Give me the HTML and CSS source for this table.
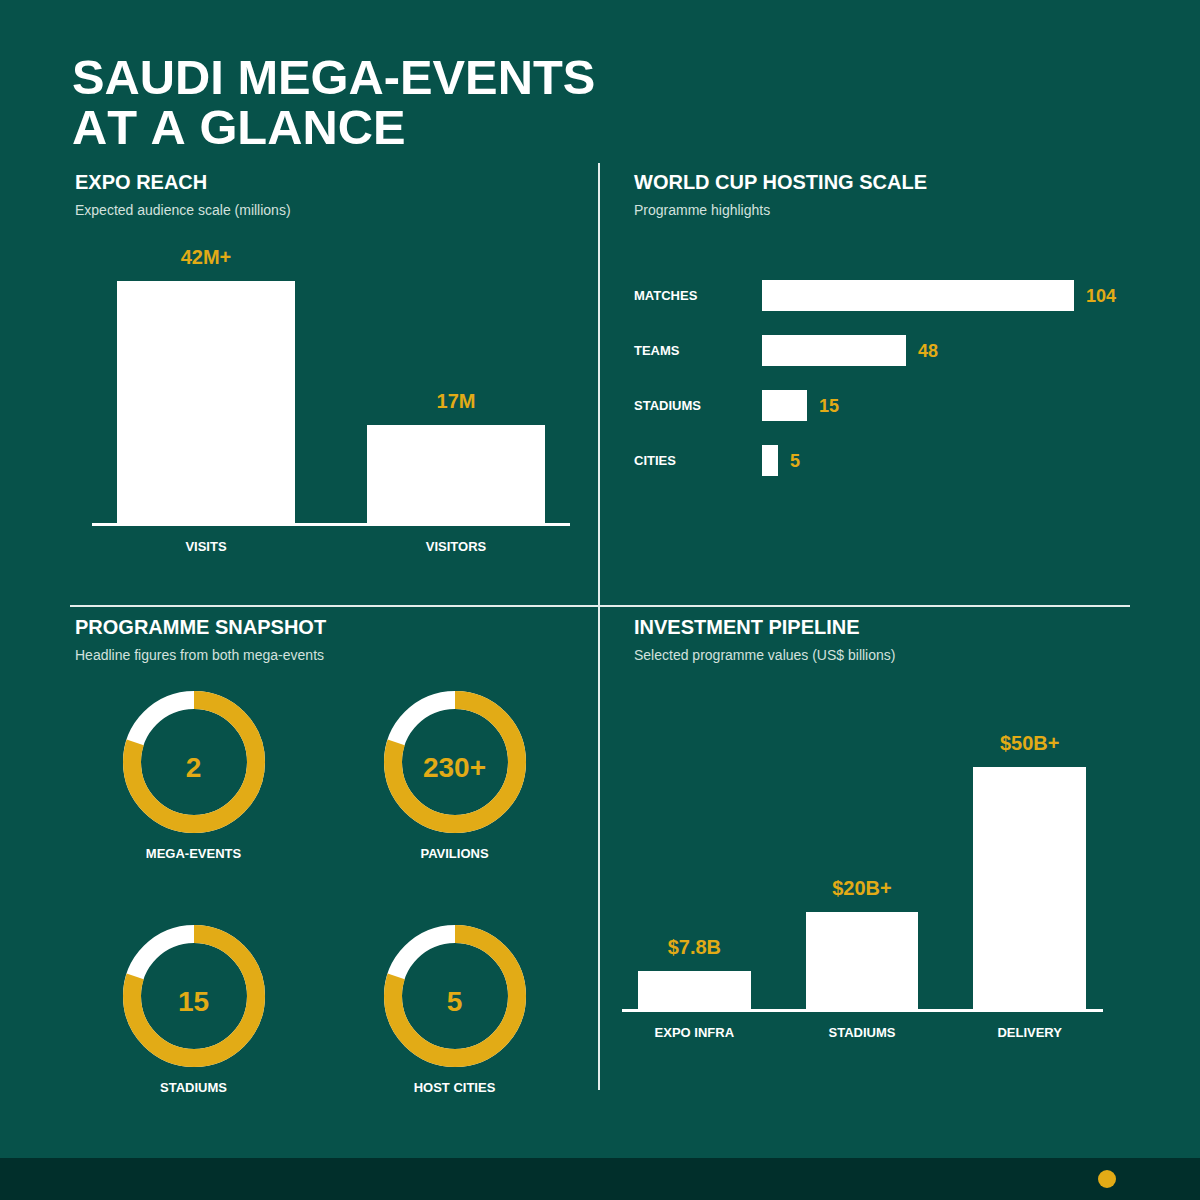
FILE: index.html
```html
<!DOCTYPE html>
<html lang="en">
<head>
<meta charset="utf-8">
<title>Saudi Mega-Events at a Glance</title>
<link rel="stylesheet" href="styles.css">
</head>
<body>
<div class="page">
  <main class="main">
    <h1 class="title">SAUDI MEGA-EVENTS<br>AT A GLANCE</h1>
    <div class="grid">
      <section class="cell cell-tl">
        <h2 class="heading">EXPO REACH</h2>
        <p class="sub">Expected audience scale (millions)</p>
        <div class="vchart expo">
          <div class="col"><span class="val">42M+</span><div class="bar" style="height:242px"></div></div>
          <div class="col"><span class="val">17M</span><div class="bar" style="height:98px"></div></div>
        </div>
        <div class="vlabels expo">
          <span class="cat">VISITS</span>
          <span class="cat">VISITORS</span>
        </div>
      </section>

      <section class="cell cell-tr">
        <h2 class="heading">WORLD CUP HOSTING SCALE</h2>
        <p class="sub">Programme highlights</p>
        <div class="hbars">
          <div class="hrow"><span class="hlabel">MATCHES</span><div class="hbar" style="width:312px"></div><span class="hval">104</span></div>
          <div class="hrow"><span class="hlabel">TEAMS</span><div class="hbar" style="width:144px"></div><span class="hval">48</span></div>
          <div class="hrow"><span class="hlabel">STADIUMS</span><div class="hbar" style="width:45px"></div><span class="hval">15</span></div>
          <div class="hrow"><span class="hlabel">CITIES</span><div class="hbar" style="width:16px"></div><span class="hval">5</span></div>
        </div>
      </section>

      <section class="cell cell-bl">
        <h2 class="heading">PROGRAMME SNAPSHOT</h2>
        <p class="sub">Headline figures from both mega-events</p>
        <div class="donuts">
          <div class="donut">
            <div class="ring">
              <svg viewBox="0 0 142 142" width="142" height="142"><circle class="ring-bg" cx="71" cy="71" r="62"/><circle class="ring-fg" cx="71" cy="71" r="62" stroke-dasharray="311.65 389.56" transform="rotate(-90 71 71)"/></svg>
              <span class="ring-num">2</span>
            </div>
            <span class="cat">MEGA-EVENTS</span>
          </div>
          <div class="donut">
            <div class="ring">
              <svg viewBox="0 0 142 142" width="142" height="142"><circle class="ring-bg" cx="71" cy="71" r="62"/><circle class="ring-fg" cx="71" cy="71" r="62" stroke-dasharray="311.65 389.56" transform="rotate(-90 71 71)"/></svg>
              <span class="ring-num">230+</span>
            </div>
            <span class="cat">PAVILIONS</span>
          </div>
          <div class="donut">
            <div class="ring">
              <svg viewBox="0 0 142 142" width="142" height="142"><circle class="ring-bg" cx="71" cy="71" r="62"/><circle class="ring-fg" cx="71" cy="71" r="62" stroke-dasharray="311.65 389.56" transform="rotate(-90 71 71)"/></svg>
              <span class="ring-num">15</span>
            </div>
            <span class="cat">STADIUMS</span>
          </div>
          <div class="donut">
            <div class="ring">
              <svg viewBox="0 0 142 142" width="142" height="142"><circle class="ring-bg" cx="71" cy="71" r="62"/><circle class="ring-fg" cx="71" cy="71" r="62" stroke-dasharray="311.65 389.56" transform="rotate(-90 71 71)"/></svg>
              <span class="ring-num">5</span>
            </div>
            <span class="cat">HOST CITIES</span>
          </div>
        </div>
      </section>

      <section class="cell cell-br">
        <h2 class="heading">INVESTMENT PIPELINE</h2>
        <p class="sub">Selected programme values (US$ billions)</p>
        <div class="vchart invest">
          <div class="col"><span class="val">$7.8B</span><div class="bar" style="height:38px"></div></div>
          <div class="col"><span class="val">$20B+</span><div class="bar" style="height:97px"></div></div>
          <div class="col"><span class="val">$50B+</span><div class="bar" style="height:242px"></div></div>
        </div>
        <div class="vlabels invest">
          <span class="cat">EXPO INFRA</span>
          <span class="cat">STADIUMS</span>
          <span class="cat">DELIVERY</span>
        </div>
      </section>
    </div>
  </main>
  <footer class="footer"><span class="dot"></span></footer>
</div>
</body>
</html>
```

FILE: styles.css
```css
* { box-sizing: border-box; }

html, body {
  margin: 0;
  padding: 0;
}

body {
  background: #07524a;
  font-family: "Liberation Sans", Arial, Helvetica, sans-serif;
  color: #ffffff;
}

.page {
  width: 1200px;
  height: 1200px;
  display: flex;
  flex-direction: column;
}

.main {
  height: 1158px;
  padding: 52px 70px 0 70px;
  background: #07524a;
}

.title {
  margin: 0;
  padding-left: 2px;
  font-size: 48.8px;
  line-height: 50px;
  font-weight: 700;
  font-kerning: none;
  color: #ffffff;
}

.grid {
  margin-top: 11px;
  display: grid;
  grid-template-columns: 530px 530px;
  grid-template-rows: 444px 483px;
}

.cell {
  padding-top: 9px;
}

.cell-tl {
  padding-left: 5px;
  border-right: 2px solid #e4edeb;
  border-bottom: 2px solid #e4edeb;
}

.cell-tr {
  padding-left: 34px;
  border-bottom: 2px solid #e4edeb;
}

.cell-bl {
  padding-top: 10px;
  padding-left: 5px;
  border-right: 2px solid #e4edeb;
}

.cell-br {
  padding-top: 10px;
  padding-left: 34px;
}

.heading {
  margin: 0;
  font-size: 20px;
  line-height: 20px;
  font-weight: 700;
  color: #ffffff;
}

.sub {
  margin: 11px 0 0 0;
  font-size: 14px;
  line-height: 14px;
  color: #d3e1de;
}

/* vertical bar charts */
.vchart {
  display: flex;
  align-items: flex-end;
  border-bottom: 3px solid #ffffff;
}

.vchart .col {
  display: flex;
  flex-direction: column;
  align-items: center;
}

.val {
  font-size: 20px;
  line-height: 20px;
  font-weight: 700;
  color: #e2ab16;
  margin-bottom: 14px;
}

.bar {
  width: 100%;
  background: #ffffff;
}

.vlabels {
  display: flex;
  margin-top: 14px;
}

.cat {
  font-size: 13px;
  line-height: 13px;
  font-weight: 700;
  color: #ffffff;
  text-align: center;
}

.expo {
  margin-left: 17px;
  width: 478px;
  padding: 0 25px;
  gap: 72px;
}

.vchart.expo {
  margin-top: 26px;
  height: 283px;
}

.expo .col,
.expo .cat {
  width: 178px;
}

.invest {
  margin-left: -12px;
  width: 481px;
  padding: 0 17px 0 16px;
  gap: 55px;
}

.vchart.invest {
  margin-top: 47px;
  height: 303px;
}

.invest .col,
.invest .cat {
  width: 113px;
}

/* horizontal bars */
.hbars {
  margin-top: 63px;
  display: flex;
  flex-direction: column;
  gap: 24px;
}

.hrow {
  display: flex;
  align-items: center;
  height: 31px;
}

.hlabel {
  width: 128px;
  font-size: 13px;
  line-height: 13px;
  font-weight: 700;
  color: #ffffff;
}

.hbar {
  height: 31px;
  background: #ffffff;
}

.hval {
  margin-left: 12px;
  font-size: 18px;
  line-height: 18px;
  font-weight: 700;
  color: #e2ab16;
}

/* donuts */
.donuts {
  margin-top: 29px;
  margin-left: 47.5px;
  display: grid;
  grid-template-columns: 142px 142px;
  column-gap: 119px;
  row-gap: 65px;
}

.donut {
  display: flex;
  flex-direction: column;
  align-items: center;
  gap: 14px;
}

.ring {
  display: grid;
  width: 142px;
  height: 142px;
  place-items: center;
}

.ring svg,
.ring .ring-num {
  grid-area: 1 / 1;
}

.ring svg {
  display: block;
}

.ring-bg {
  fill: none;
  stroke: #ffffff;
  stroke-width: 18;
}

.ring-fg {
  fill: none;
  stroke: #e2ab16;
  stroke-width: 18;
}

.ring-num {
  margin-top: 12px;
  font-size: 28px;
  line-height: 28px;
  font-weight: 700;
  color: #e2ab16;
}

.donut .cat {
  white-space: nowrap;
}

/* footer */
.footer {
  height: 42px;
  background: #012f2b;
  display: flex;
  align-items: center;
  justify-content: flex-end;
  padding-right: 84px;
}

.dot {
  width: 18px;
  height: 18px;
  border-radius: 50%;
  background: #e2ab16;
}
```
